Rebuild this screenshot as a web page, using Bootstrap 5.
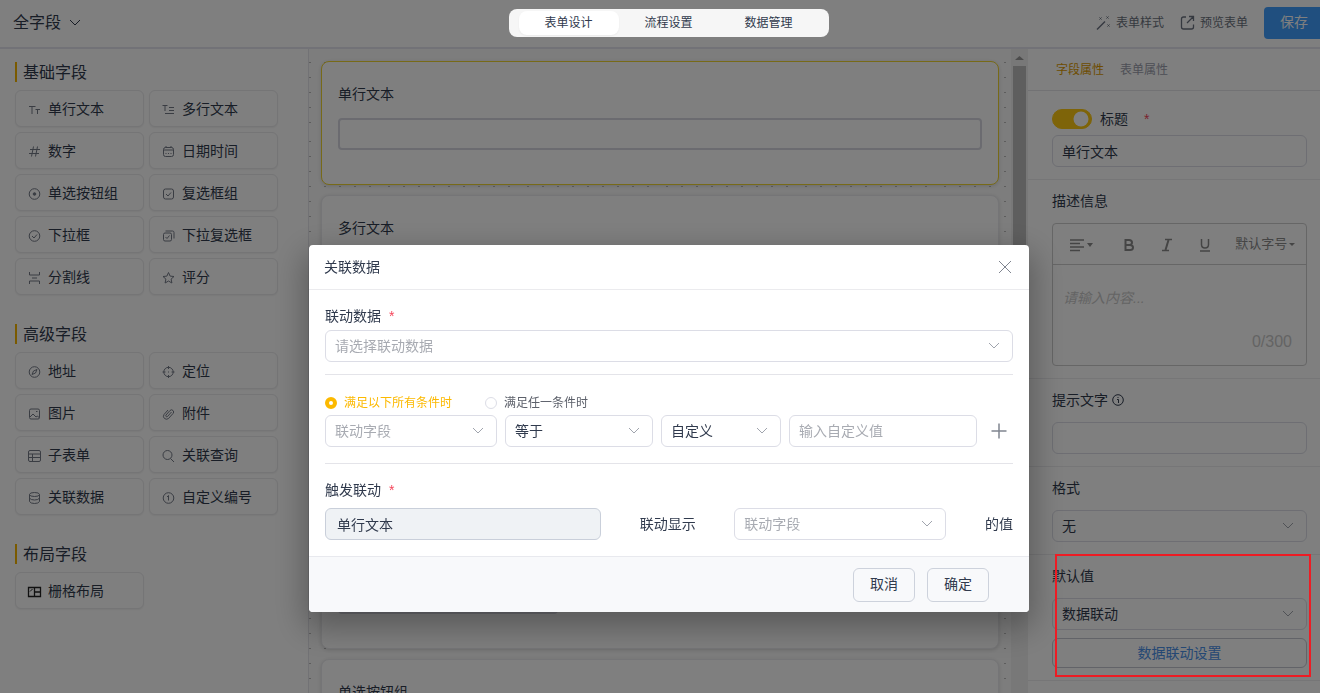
<!DOCTYPE html>
<html lang="zh-CN">
<head>
<meta charset="utf-8">
<meta name="viewport" content="width=device-width, initial-scale=1">
<title>表单设计</title>
<link href="https://cdn.jsdelivr.net/npm/bootstrap@5.3.0/dist/css/bootstrap.min.css" rel="stylesheet">
<style>
:root{--ink:#303a4d;--muted:#6b7280;--hint:#a8abb2;--line:#dcdde6;--gold:#fcb900}
body{font:14px/20px "Liberation Sans","Noto Sans CJK SC",sans-serif;color:var(--ink);background:#fff;overflow:hidden}
svg{fill:none;stroke:currentColor;flex:none}
.shell{width:calc(100% + 18px);height:100vh}
/* top bar */
.topbar{height:49px;padding:0 14px 2px 13px;border-bottom:2px solid #e4e4ee}
.topbar .side{flex:1 1 0}
.form-name{font-size:16px}
.tabs-pill{background:#f6f6f6;border-radius:8px;padding:2px 10px;z-index:1060}
.tabs-pill .btn{width:100px;height:24px;padding:0;font-size:12px;line-height:22px;border-radius:8px;color:var(--ink);border:0}
.tabs-pill .active{background:#fff;box-shadow:0 1px 2px #0000000d}
.tool-link{font-size:12px;color:var(--muted);text-decoration:none}
.btn-save{background:#409eff;color:#fff;width:60px;height:32px;padding:0;font-size:14px;border-radius:4px}
/* field palette */
.palette{width:309px;padding:13px 30px 0 15px;border-right:1px solid #e4e4ea}
.palette h2{font-size:16px;height:20px;line-height:22px;font-weight:400;border-left:2px solid #f5b400;padding-left:6px;margin:0 0 8px}
.field-grid{display:grid;grid-template-columns:1fr 1fr;gap:5px;margin-bottom:29px}
.field-btn{height:37px;border:1px solid #eaeaec;border-radius:6px;background:#fff;box-shadow:0 1px 2px #0000000f;padding:0 0 0 11px;font-size:14px;color:var(--ink);display:flex;align-items:center;gap:6px;text-align:left}
.field-btn svg{color:#747a87;margin-top:2px}
/* canvas */
.stage{padding:12px 12px 0;background:#fbfbfb url("data:image/svg+xml,%3Csvg xmlns='http://www.w3.org/2000/svg' width='139' height='139'%3E%3Cpattern id='p' width='15' height='15' patternUnits='userSpaceOnUse'%3E%3Crect width='2' height='1' fill='%23bbb'/%3E%3C/pattern%3E%3Crect width='135' height='135' fill='url(%23p)'/%3E%3C/svg%3E") -60px -47px;overflow:hidden}
.form-block{background:#fff;border:1px solid #ebebee;border-radius:8px;box-shadow:0 1px 4px #00000026;padding:21px 16px 34px;margin-bottom:10px}
.form-block.selected{border-color:#efd530}
.form-block label{display:block;line-height:22px;margin-bottom:13px}
.form-block .form-control{border:2px solid #d6d7e0;border-radius:4px;height:32px}
.form-block .tall{height:228px}
.form-block .short{width:220px}
.bar-track{width:17px;background:#f1f1f1;color:#999;padding-top:7px}
.bar-track i{display:block;width:13px;height:200px;background:#bdbdbd;margin-top:6px}
/* properties */
.props{width:310px;background:#fff}
.props nav{height:42px;border-bottom:1px solid #e4e4e9;padding:11px 28px;gap:16px;font-size:12px}
.props nav a{color:#9b9eac;text-decoration:none}
.props nav a.active{color:#dc9a00}
.prop{padding:10px 31px 12px 24px;border-bottom:1px solid #ececef}
.prop:first-of-type{padding-top:18px}
.prop-label{display:flex;align-items:center;height:22px;margin-bottom:11px;gap:4px}
.box{height:32px;border:1px solid var(--line);border-radius:6px;padding:0 9px 1px;font-size:14px;line-height:20px;color:var(--ink);background-color:#fff}
.box::placeholder,.box.hint{color:var(--hint)}
select.box{appearance:none;width:100%;background:#fff url("data:image/svg+xml,%3Csvg xmlns='http://www.w3.org/2000/svg' width='12' height='8' fill='none' stroke='%23a0a4ad'%3E%3Cpath d='M1 1l5 5 5-5'/%3E%3C/svg%3E") no-repeat right 12px center}
.form-switch .form-check-input{width:40px;height:20px;margin:0;background-size:20px}
.form-check-input:checked{background-color:#fcc812;border-color:#fcc812}
.star{color:#f5455a}
.editor{border:1px solid #ccc;border-radius:4px}
.editor-tools{height:41px;border-bottom:1px solid #ccc;color:#8a8a8a}
.editor-tools button{border:0;background:none;color:inherit;padding:0;width:38px;font-size:14px}
.editor-tools .wide{width:57px}
.editor-tools .size{width:auto;flex:1;padding:0;font-size:13px;white-space:nowrap}
.editor-tools .size .caret{border-width:3px 2px 0}
.caret{display:inline-block;border:3px solid transparent;border-top:4px solid;border-left-color:transparent;border-right-color:transparent;border-bottom:0;vertical-align:2px}
.editor-tools .size .caret{border-left-width:3px;border-right-width:3px;margin-left:-2px}
.editor textarea{border:0;resize:none;height:66px;padding:23px 10px 0;display:block;width:100%;font-style:italic;font-size:14px;outline:0}
.editor textarea::placeholder{color:#c8c8c8}
.counter{font-size:16px;line-height:20px;color:#c8c8c8;padding:1px 14px 13px;text-align:right}
.btn-link-data{height:30px;padding:0;width:100%;border:1px solid #c4c7d0;border-radius:6px;color:#4a90e8;margin-top:8px;font-size:14px}
/* dialog */
.modal,.shade{width:calc(100% + 18px)}
.shade{position:fixed;inset:0 auto 0 0;background:#00000080;z-index:1050}
.modal-dialog{max-width:720px;margin:245px auto 0}
.modal-content{border:0;border-radius:4px;box-shadow:0 12px 32px 4px #0000004d;color:var(--ink)}
.modal-header{height:45px;padding:0 16px 0 15px;border-color:#ebebee}
.modal-header h1{font-size:14px;font-weight:400}
.modal-body{padding:16px}
.modal-body hr{margin:0;border-color:#d8d8e0;opacity:.7}
.modal-footer{height:56px;padding:0 40px;gap:12px;background:#f8f9fb;border-color:#e8e9ee;border-radius:0 0 4px 4px}
.modal-footer .btn{width:62px;height:34px;border:1px solid #cdd2dc;border-radius:6px;margin:0;padding:0;font-size:14px;color:var(--ink)}
.modal .form-label{display:block;margin:0}
.icon-btn{border:0;background:none;padding:0;color:#808590;display:flex}
.conditions{font-size:12px;height:20px;margin:18px 0 2px}
.conditions .form-check-input{width:12px;height:12px;margin:0;border-color:var(--line)}
.conditions .form-check-input:checked{background:#fff;border:4px solid var(--gold)}
.conditions label{gap:7px;color:#5c606a}
.conditions label.on{color:var(--gold)}
.rule{display:grid;grid-template-columns:172fr 148fr 120fr 188fr 28px;gap:8px;align-items:center}
.box.locked{background:#eff2f5;border-color:#c9cfda;padding-left:11px}
.callout-frame{position:fixed;left:1055px;top:554px;width:256px;height:123px;border:2px solid #ee1c24;z-index:1070;pointer-events:none}
</style>
</head>
<body>
<div class="shell d-flex flex-column">
  <header class="topbar d-flex align-items-center flex-shrink-0">
    <div class="side d-flex align-items-center gap-2">
      <span class="form-name">全字段</span>
      <svg width="12" height="8" stroke="#6b7280"><path d="M1 1l5 5 5-5"/></svg>
    </div>
    <div class="tabs-pill d-flex position-relative" role="tablist">
      <button class="btn active" role="tab">表单设计</button>
      <button class="btn" role="tab">流程设置</button>
      <button class="btn" role="tab">数据管理</button>
    </div>
    <div class="side d-flex align-items-center justify-content-end">
      <a href="#" class="tool-link d-flex align-items-center gap-1 me-3">
        <svg width="16" height="16"><path d="M1 14.500L9 6.500" stroke-width="1.500"/><path d="M10.500 1.500l2 2M12.500 1.500l-2 2M3.500 2.500l2 2M5.500 2.500l-2 2M11.500 9.500l2 2M13.500 9.500l-2 2"/></svg>表单样式</a>
      <a href="#" class="tool-link d-flex align-items-center gap-1">
        <svg width="16" height="16" stroke-width="1.300"><path d="M6 2H3.500Q1.500 2 1.500 4v8q0 2 2 2h8q2 0 2-2V9.500M9 1.500h4.500V6M13.500 1.500L7 8"/></svg>预览表单</a>
      <button class="btn btn-save ms-3">保存</button>
    </div>
  </header>

  <div class="d-flex flex-grow-1" style="min-height:0">
    <aside class="palette flex-shrink-0">
      <h2>基础字段</h2>
      <div class="field-grid">
        <button class="field-btn"><svg width="15" height="14"><path d="M2 3.500h6.500M5 3.500V11M8.500 6.500H13M10.500 6.500V11"/></svg>单行文本</button>
        <button class="field-btn"><svg width="15" height="14"><path d="M1.500 2.500h5M4 2.500V8M8 4.500h5M8 7.500h5M4 10.500h9"/></svg>多行文本</button>
        <button class="field-btn"><svg width="15" height="14"><path d="M3 4.500h10M2 8.500h10M6.500 1.500l-2 10M10.500 1.500l-2 10"/></svg>数字</button>
        <button class="field-btn"><svg width="15" height="14"><rect x="2.500" y="2.500" width="10" height="9" rx="2"/><path d="M2.500 5h10M5 1v2M10 1v2"/><path d="M4.500 8.500h6" stroke-dasharray="1 1.500"/></svg>日期时间</button>
        <button class="field-btn"><svg width="15" height="14"><circle cx="7.500" cy="7" r="5.300"/><circle cx="7.500" cy="7" r="1.300" fill="currentColor"/></svg>单选按钮组</button>
        <button class="field-btn"><svg width="15" height="14"><rect x="2.500" y="2" width="10" height="10" rx="2"/><path d="M5 7l2 2 3-3.500"/></svg>复选框组</button>
        <button class="field-btn"><svg width="15" height="14"><circle cx="7.500" cy="7" r="5.300"/><path d="M5 7l2 2 3-3.500"/></svg>下拉框</button>
        <button class="field-btn"><svg width="15" height="14"><path d="M4.500 2h7q1.500 0 1.500 1.500v6"/><rect x="2.500" y="4" width="8" height="8" rx="1.500"/><path d="M4.500 8L6 9.500 8.500 6.500"/></svg>下拉复选框</button>
        <button class="field-btn"><svg width="15" height="14"><path d="M2.500 1v3h10V1M5 7h5M2.500 13v-3h10v3"/></svg>分割线</button>
        <button class="field-btn"><svg width="15" height="14" stroke-linejoin="round"><path d="M7.500 1.500l1.600 3.600 3.900.4-2.900 2.600.8 3.900-3.400-2-3.400 2 .8-3.900L2 5.500l3.900-.4z"/></svg>评分</button>
      </div>
      <h2>高级字段</h2>
      <div class="field-grid">
        <button class="field-btn"><svg width="15" height="14"><circle cx="7.500" cy="7" r="5.300"/><path d="M10 4.500L8.500 8 5 9.500 6.500 6z"/></svg>地址</button>
        <button class="field-btn"><svg width="15" height="14"><circle cx="7.500" cy="7" r="4.700"/><path d="M7.500 1v3M7.500 10v3M1.500 7h3M10.500 7h3M7 7h1"/></svg>定位</button>
        <button class="field-btn"><svg width="15" height="14"><rect x="2.500" y="2" width="10" height="10" rx="1.500"/><path d="M3 10l3-3 3 3 1.500-1 2 2M9 4.500h1.500"/></svg>图片</button>
        <button class="field-btn"><svg width="15" height="14"><path d="M10.500 5L6.500 9.500Q5.500 10 5 9.500t0-1.500L9 3.500Q10.500 2 12 3.500t0 3L7.500 11.500Q5.500 13 3.500 11.500t-.5-4L7 3"/></svg>附件</button>
        <button class="field-btn"><svg width="15" height="14"><rect x="1.500" y="1.500" width="12" height="11" rx="1.500"/><path d="M1.500 5h12M1.500 8.500h12M5.500 5v7.500"/></svg>子表单</button>
        <button class="field-btn"><svg width="15" height="14"><circle cx="6.500" cy="6" r="4.500"/><path d="M9.500 9.500L13 13"/></svg>关联查询</button>
        <button class="field-btn"><svg width="15" height="14"><ellipse cx="7.500" cy="3.500" rx="5" ry="2"/><path d="M2.500 3.500v7q1 2 5 2t5-2v-7M2.500 7q1 2 5 2t5-2"/></svg>关联数据</button>
        <button class="field-btn"><svg width="15" height="14"><circle cx="7.500" cy="7" r="5.300"/><path d="M6 6l1.500-1.500v5"/></svg>自定义编号</button>
      </div>
      <h2>布局字段</h2>
      <div class="field-grid">
        <button class="field-btn"><svg width="15" height="14" style="color:#222"><path d="M1.500 2.500h12v9h-12zM7.500 2v10M8 7h5.500" stroke-width="1.300"/><path d="M3 6.500L5.500 4"/></svg>栅格布局</button>
      </div>
    </aside>

    <main class="stage flex-grow-1">
      <div class="form-block selected"><label for="f1">单行文本</label><input id="f1" class="form-control"></div>
      <div class="form-block"><label for="f2">多行文本</label><textarea id="f2" class="form-control tall"></textarea></div>
      <div class="form-block"><label for="f3">数字</label><input id="f3" class="form-control short"></div>
      <div class="form-block"><label>单选按钮组</label></div>
    </main>
    <div class="bar-track d-flex flex-column align-items-center flex-shrink-0"><svg width="9" height="4" viewBox="0 0 9 4" style="fill:#999;stroke:none"><path d="M0 4L4.500 0 9 4z"/></svg><i></i></div>

    <aside class="props flex-shrink-0">
      <nav class="d-flex"><a href="#" class="active">字段属性</a><a href="#">表单属性</a></nav>
      <section class="prop">
        <div class="form-switch d-flex align-items-center p-0 mb-0" style="height:20px">
          <input class="form-check-input" type="checkbox" role="switch" id="sw" checked>
          <label for="sw" class="ms-2">标题</label><span class="star ms-3">*</span>
        </div>
        <input class="box w-100" style="margin-top:6px" value="单行文本" aria-label="标题">
      </section>
      <section class="prop">
        <label class="prop-label" for="desc">描述信息</label>
        <div class="editor">
          <div class="editor-tools d-flex align-items-center">
            <button class="wide" aria-label="对齐"><svg width="14" height="14" stroke-width="1.300"><path d="M0 2h14M0 5.500h10M0 9h14M0 12.500h10"/></svg> <span class="caret"></span></button>
            <button aria-label="粗体"><svg width="12" height="14" stroke-width="2"><path d="M2.500 2H6q3 0 3 2.500T6 7H2.500zM2.500 7H7q3 0 3 2.500T7 12H2.500z"/></svg></button>
            <button aria-label="斜体"><svg width="12" height="14" stroke-width="1.500"><path d="M4 1.500h7M1 12.500h7"/><path d="M7.500 2l-3 10" stroke-width="2"/></svg></button>
            <button aria-label="下划线"><svg width="12" height="14" stroke-width="1.500"><path d="M2.500 1v5.500Q2.500 10 6 10t3.500-3.500V1M1 13h10"/></svg></button>
            <button class="size">默认字号 <span class="caret"></span></button>
          </div>
          <textarea id="desc" placeholder="请输入内容..."></textarea>
          <div class="counter">0/300</div>
        </div>
      </section>
      <section class="prop">
        <label class="prop-label" for="tip">提示文字 <svg width="12" height="12" stroke="#6b7280"><circle cx="6" cy="6" r="5.300"/><path d="M5 5.500h1.500v3.500M6 3v1"/></svg></label>
        <input id="tip" class="box w-100 d-block">
      </section>
      <section class="prop">
        <label class="prop-label" for="fmt">格式</label>
        <select id="fmt" class="box d-block"><option>无</option></select>
      </section>
      <section class="prop">
        <label class="prop-label" for="def">默认值</label>
        <select id="def" class="box d-block"><option>数据联动</option></select>
        <button class="btn btn-link-data d-block">数据联动设置</button>
      </section>
    </aside>
  </div>
</div>

<div class="shade"></div>
<div class="modal d-block" role="dialog" aria-labelledby="dlg">
  <div class="modal-dialog">
    <div class="modal-content">
      <div class="modal-header">
        <h1 class="m-0" id="dlg">关联数据</h1>
        <button class="icon-btn" aria-label="关闭"><svg width="16" height="16"><path d="M2 2l12 12M14 2L2 14"/></svg></button>
      </div>
      <div class="modal-body">
        <label class="form-label" for="src">联动数据 <span class="star ms-1">*</span></label>
        <select id="src" class="box hint d-block mt-1"><option>请选择联动数据</option></select>
        <hr style="margin-top:12px">
        <div class="conditions d-flex align-items-center">
          <label class="d-flex align-items-center on"><input class="form-check-input" type="radio" name="cond" checked>满足以下所有条件时</label>
          <label class="d-flex align-items-center" style="margin-left:33px"><input class="form-check-input" type="radio" name="cond">满足任一条件时</label>
        </div>
        <div class="rule mb-3">
          <select class="box hint" aria-label="联动字段"><option>联动字段</option></select>
          <select class="box" aria-label="条件"><option>等于</option></select>
          <select class="box" aria-label="类型"><option>自定义</option></select>
          <input class="box w-100" placeholder="输入自定义值" aria-label="值">
          <button class="icon-btn justify-content-center" aria-label="添加"><svg width="16" height="16" stroke-width="1.500"><path d="M8 .5v15M.5 8h15"/></svg></button>
        </div>
        <hr class="mb-3">
        <label class="form-label" for="trg">触发联动 <span class="star ms-1">*</span></label>
        <div class="d-flex align-items-center justify-content-between mt-2">
          <input id="trg" class="box locked" style="width:276px" value="单行文本" disabled>
          <span>联动显示</span>
          <select class="box hint" style="width:212px" aria-label="显示字段"><option>联动字段</option></select>
          <span>的值</span>
        </div>
      </div>
      <div class="modal-footer">
        <button class="btn">取消</button>
        <button class="btn">确定</button>
      </div>
    </div>
  </div>
</div>
<div class="callout-frame"></div>
<script src="https://cdn.jsdelivr.net/npm/bootstrap@5.3.0/dist/js/bootstrap.bundle.min.js"></script>
</body>
</html>
